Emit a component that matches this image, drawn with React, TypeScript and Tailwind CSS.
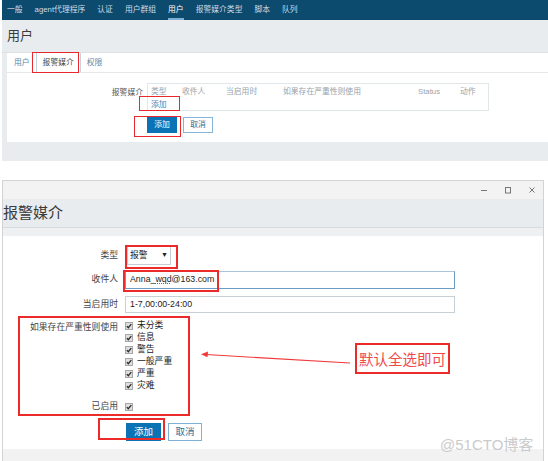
import React from "react";

const navItems = ["一般", "agent代理程序", "认证", "用户群组", "用户", "报警媒介类型", "脚本", "队列"];
const severities = ["未分类", "信息", "警告", "一般严重", "严重", "灾难"];

function Check() {
  return (
    <svg width="8" height="8" viewBox="0 0 8 8" className="shrink-0">
      <rect x="0.5" y="0.5" width="7" height="7" fill="#dedede" stroke="#a8a8a8" />
      <path d="M1.8 4.1 L3.3 5.7 L6.3 2.1" fill="none" stroke="#2a2a2a" strokeWidth="1.3" />
    </svg>
  );
}

export default function App() {
  return (
    <div className="relative w-[548px] h-[461px] bg-white overflow-hidden font-['Liberation_Sans','Noto_Sans_CJK_SC',sans-serif] text-[#333]">
      {/* ===== Top screenshot ===== */}
      <div className="ml-[2px] h-[161px] bg-[#e9ecef] flex flex-col">
        <nav className="h-[20px] bg-[#0c4a6e] flex items-stretch gap-[12px] pl-[5px] text-[7.8px] text-[#d0dce5]">
          {navItems.map((n) => (
            <span
              key={n}
              className={
                n === "用户"
                  ? "flex items-center border-b-2 border-[#7fb0d2] pt-[2px] text-white"
                  : "flex items-center"
              }
            >
              {n}
            </span>
          ))}
        </nav>
        <div className="h-[33px] flex items-center pl-[5px] text-[13px] text-[#3c3c3c] border-b border-[#dde1e4]">
          用户
        </div>
        <div className="ml-[5px] h-[89px] bg-white flex flex-col">
          <div className="h-[20px] border-b border-[#e4e8eb] flex items-stretch pl-[1px] text-[7.8px]">
            <span className="flex items-center px-[6px] text-[#5d86a6]">用户</span>
            <span className="flex items-center px-[6px] border-x border-[#c6d3dd] text-[#444] bg-white">报警媒介</span>
            <span className="flex items-center px-[6px] text-[#5d86a6]">权限</span>
          </div>
          <div className="mt-[10px] flex gap-[4px]">
            <div className="w-[136px] text-right text-[7.8px] text-[#555] pt-[4px]">报警媒介</div>
            <div className="w-[342px] h-[28px] border border-[#e1e6e9] text-[7.8px] flex flex-col pl-[3px]">
              <div className="h-[15px] flex items-center text-[#98a3ab]">
                <span className="w-[31px]">类型</span>
                <span className="w-[44px]">收件人</span>
                <span className="w-[57px]">当启用时</span>
                <span className="w-[135px]">如果存在严重性则使用</span>
                <span className="w-[42px]">Status</span>
                <span>动作</span>
              </div>
              <div className="h-[11px] flex items-center text-[#4f82ad]">添加</div>
            </div>
          </div>
          <div className="mt-[6px] ml-[140px] flex gap-[6px] text-[7.8px]">
            <div className="w-[30px] h-[16px] bg-[#0a72b5] text-white flex items-center justify-center">添加</div>
            <div className="w-[30px] h-[16px] border border-[#86b5d7] text-[#2a6c9c] bg-white flex items-center justify-center">取消</div>
          </div>
        </div>
      </div>

      {/* ===== Bottom screenshot (window) ===== */}
      <div className="mt-[19px] ml-[2px] w-[542px] h-[281px] border-x border-t border-[#d3d3d3] flex flex-col">
        <div className="h-[18px] bg-[#f3f3f3] flex items-center justify-end gap-[16px] pr-[7px]">
          <svg width="8" height="8" viewBox="0 0 8 8">
            <path d="M1 4.5 H7" stroke="#777" strokeWidth="1" />
          </svg>
          <svg width="8" height="8" viewBox="0 0 8 8">
            <rect x="1.5" y="1.5" width="5" height="5.5" fill="none" stroke="#777" strokeWidth="1" />
          </svg>
          <svg width="8" height="8" viewBox="0 0 8 8">
            <path d="M1.5 1.5 L6.5 6.5 M6.5 1.5 L1.5 6.5" stroke="#777" strokeWidth="1" />
          </svg>
        </div>
        <div className="h-[29px] bg-[#e9ecef] flex items-center text-[15px] text-[#3a3a3a] border-b border-[#d7dbde]">
          报警媒介
        </div>
        <div className="h-[8px] bg-[#eef0f2]" />
        <div className="flex-1 bg-white flex flex-col text-[8.8px]">
          {/* 类型 */}
          <div className="mt-[10px] h-[19px] flex items-center gap-[7px]">
            <div className="w-[115px] text-right text-[#444]">类型</div>
            <div className="ml-[2px] w-[44px] h-[19px] border border-[#c5ced5] flex items-center justify-between px-[2px] text-[#222]">
              <span>报警</span>
              <span className="text-[7px]">▼</span>
            </div>
          </div>
          {/* 收件人 */}
          <div className="mt-[6px] h-[18px] flex items-center gap-[7px]">
            <div className="w-[115px] text-right text-[#444]">收件人</div>
            <div className="w-[330px] h-[18px] border border-[#6a9cc6] border-t-[#a9c6de] flex items-center pl-[4px] text-[#222]">
              Anna_<span className="underline decoration-dotted decoration-[#e33]">wqd</span>@163.com
            </div>
          </div>
          {/* 当启用时 */}
          <div className="mt-[7px] h-[17px] flex items-center gap-[7px]">
            <div className="w-[115px] text-right text-[#444]">当启用时</div>
            <div className="w-[330px] h-[17px] border border-[#c6d0d7] flex items-center pl-[4px] text-[#222]">
              1-7,00:00-24:00
            </div>
          </div>
          {/* severity */}
          <div className="mt-[7px] flex gap-[7px]">
            <div className="w-[115px] text-right text-[#444] pt-[1px] leading-[12px]">如果存在严重性则使用</div>
            <div className="flex flex-col">
              {severities.map((s) => (
                <div key={s} className="h-[12px] flex items-center gap-[4px] text-[#222]">
                  <Check />
                  <span>{s}</span>
                </div>
              ))}
            </div>
          </div>
          {/* 已启用 */}
          <div className="mt-[9px] h-[12px] flex items-center gap-[7px]">
            <div className="w-[115px] text-right text-[#444]">已启用</div>
            <Check />
          </div>
          {/* buttons */}
          <div className="mt-[10px] flex gap-[7px] ml-[123px] text-[9.5px]">
            <div className="w-[35px] h-[18px] bg-[#0a72b5] text-white flex items-center justify-center">添加</div>
            <div className="w-[34px] h-[18px] border border-[#7fb1d6] text-[#2a6c9c] bg-white flex items-center justify-center">取消</div>
          </div>
        </div>
        <div className="h-[12px] bg-[#f2f2f2]" />
      </div>

      {/* ===== Annotations ===== */}
      <div className="absolute left-[32px] top-[52px] w-[47px] h-[21px] border-[1.5px] border-[#e8282c]" />
      <div className="absolute left-[139px] top-[96px] w-[41px] h-[15px] border-[1.5px] border-[#e8282c]" />
      <div className="absolute left-[134px] top-[116px] w-[47px] h-[21px] border-[1.5px] border-[#e8282c]" />
      <div className="absolute left-[125px] top-[245px] w-[53px] h-[24px] border-2 border-[#ec2a2a]" />
      <div className="absolute left-[123px] top-[270px] w-[96px] h-[22px] border-2 border-[#ec2a2a]" />
      <div className="absolute left-[18px] top-[316px] w-[172px] h-[100px] border-2 border-[#ec2a2a]" />
      <div className="absolute left-[98px] top-[418px] w-[67px] h-[22px] border-2 border-[#ec2a2a]" />

      <svg className="absolute left-0 top-0" width="548" height="461" viewBox="0 0 548 461">
        <path d="M350 363 L206 354.5" stroke="#f03a3a" strokeWidth="1.1" fill="none" />
        <path d="M201 354.2 L208 351.5 L207.5 357.2 Z" fill="#f03a3a" />
      </svg>

      <div className="absolute left-[355px] top-[343px] w-[95px] h-[31px] border-2 border-[#ec2a2a] bg-white flex items-center justify-center text-[14.5px] text-[#f04a4a] font-['Noto_Sans_CJK_SC',sans-serif]">
        默认全选即可
      </div>

      <div className="absolute left-[440px] top-[436px] text-[15px] text-[#cbcbcb] leading-[18px]">
        @51CTO博客
      </div>
    </div>
  );
}
